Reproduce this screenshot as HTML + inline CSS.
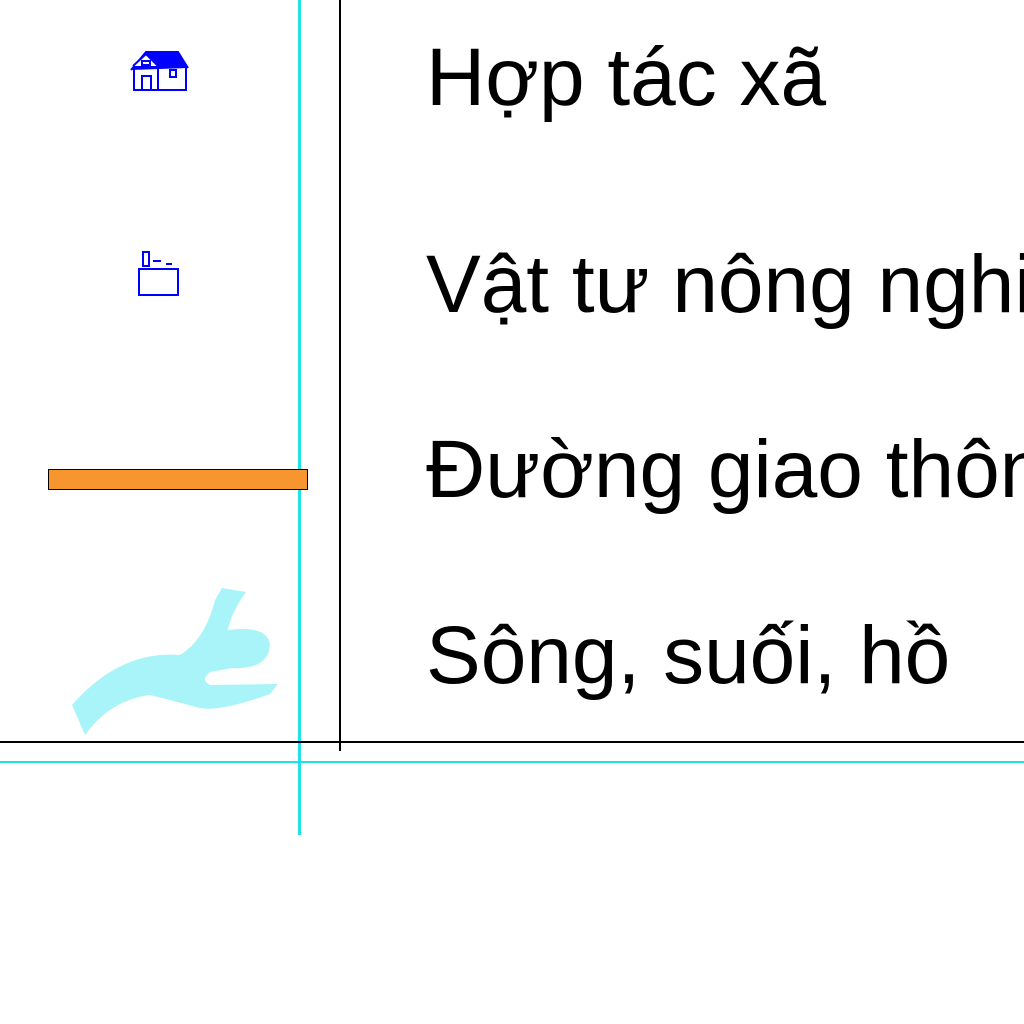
<html><body style="margin:0;width:1024px;height:1024px;background:#fff;position:relative;overflow:hidden;font-family:'Liberation Sans',sans-serif">
<div style="position:absolute;left:298px;top:0;width:3px;height:835px;background:#22e0e8"></div>
<div style="position:absolute;left:339px;top:0;width:2px;height:751px;background:#000"></div>
<div style="position:absolute;left:0;top:741px;width:1024px;height:2px;background:#000"></div>
<div style="position:absolute;left:0;top:761px;width:1024px;height:2px;background:#22e0e8"></div>
<svg style="position:absolute;left:0;top:0" width="340" height="760">
<g fill="none" stroke="#00f" stroke-width="2">
<path d="M131 70 L146 52 L178 52 L188 68" fill="#00f"/>
<path d="M133 66 L146 54 L158 66" fill="#fff"/>
<rect x="134" y="68" width="24" height="22"/><rect x="158" y="66" width="28" height="24"/>
<rect x="142" y="76" width="9" height="14"/><rect x="170" y="70" width="6" height="7"/>
<rect x="142" y="61" width="8" height="4"/>
<rect x="139" y="269" width="39" height="26"/><rect x="143" y="252" width="6" height="14"/>
<path d="M153 261 h8 M166 264 h6"/>
</g>
<rect x="48.5" y="469.5" width="259" height="20" fill="#f7962f" stroke="#000"/>
<path d="M72 705 Q120 650 180 655 Q205 640 215 600 L222 588 L246 592 Q230 615 228 630 Q268 625 270 645 Q268 670 232 668 L210 672 Q200 680 210 685 L278 684 L270 694 Q220 712 200 708 Q170 700 150 695 Q110 700 85 735 Z" fill="#a8f4f8"/>
</svg>
<div style="position:absolute;left:426px;top:0;width:598px;height:740px;overflow:hidden;font-size:82px;line-height:1;color:#000;white-space:nowrap">
<div style="position:absolute;top:37px">Hợp tác xã</div>
<div style="position:absolute;top:244px">Vật tư nông nghiệp</div>
<div style="position:absolute;top:429px">Đường giao thông</div>
<div style="position:absolute;top:615px">Sông, suối, hồ</div>
</div>
</body></html>
